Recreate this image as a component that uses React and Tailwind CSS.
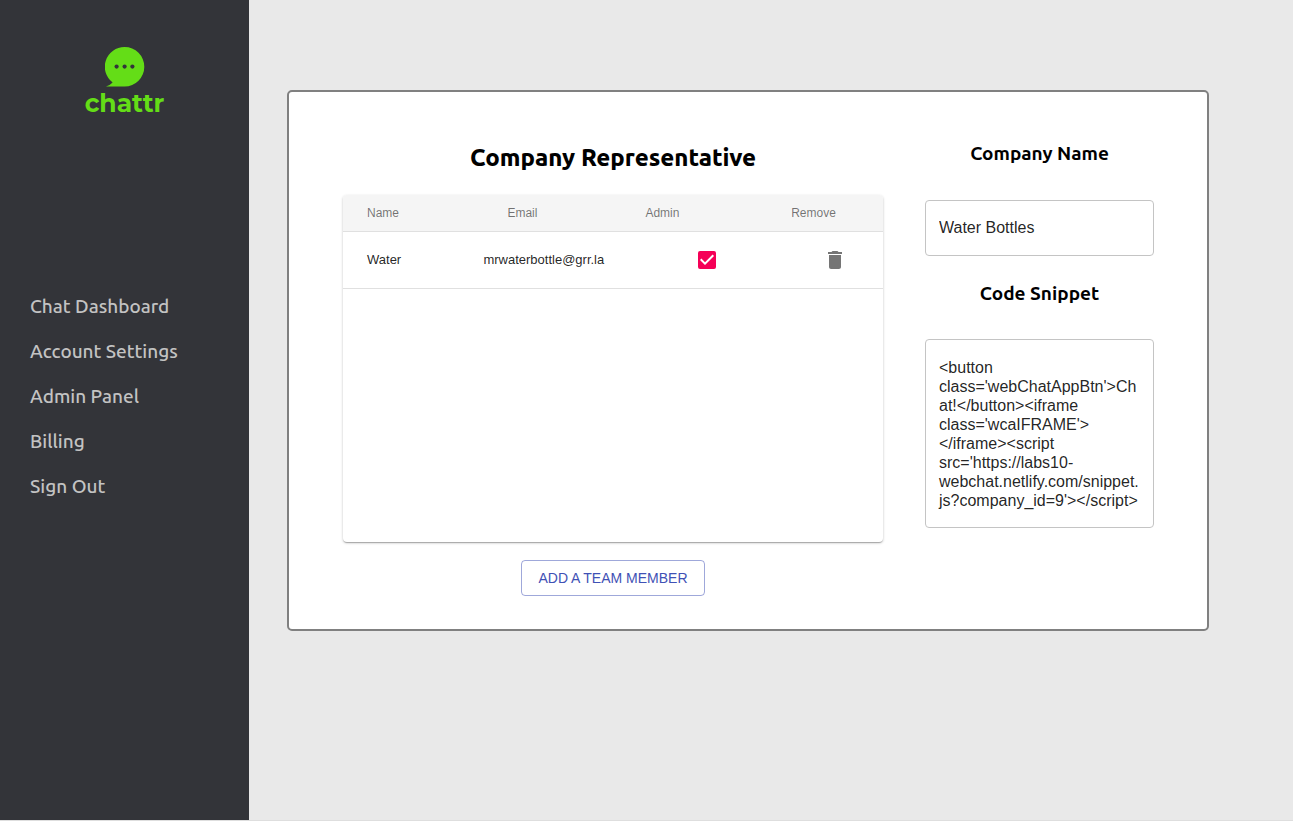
import { useState } from "react";
import { MdCheckBox, MdCheckBoxOutlineBlank, MdDelete } from "react-icons/md";

const LINKS = ["Chat Dashboard", "Account Settings", "Admin Panel", "Billing", "Sign Out"];

const SNIPPET =
  "<button class='webChatAppBtn'>Chat!</button><iframe class='wcaIFRAME'></iframe><script src='https://labs10-webchat.netlify.com/snippet.js?company_id=9'></script>";

function Logo() {
  return (
    <a href="#home" className="flex flex-col items-center text-[#64dd17]">
      <svg viewBox="0.4 0 40 40" className="h-10 w-10" aria-hidden="true">
        <path
          fill="currentColor"
          d="M20 0a19.7 19.7 0 0 1 0 39.4H1.4q4.6-1.6 6.6-4A19.7 19.7 0 0 1 20 0Z"
        />
        <g fill="#333439">
          <circle cx="12" cy="19.6" r="2.1" />
          <circle cx="20" cy="19.6" r="2.1" />
          <circle cx="27.8" cy="19.6" r="2.1" />
        </g>
      </svg>
      <span className="font-['Montserrat','Inter',sans-serif] text-[25px] leading-8 font-bold">chattr</span>
    </a>
  );
}

function Sidebar() {
  return (
    <aside className="flex w-[249px] shrink-0 flex-col bg-[#333439] pt-[47px]">
      <Logo />
      <nav className="mt-[165px] flex flex-col pl-[30px] font-['Ubuntu','Noto_Sans',sans-serif] text-[19px] font-medium text-[#c3c3c3]">
        {LINKS.map((label) => (
          <a key={label} href="#" className="flex h-[45px] items-center">
            {label}
          </a>
        ))}
      </nav>
    </aside>
  );
}

function TeamTable() {
  const [admin, setAdmin] = useState(true);
  const Box = admin ? MdCheckBox : MdCheckBoxOutlineBlank;
  return (
    <div className="min-h-[347px] w-full overflow-hidden rounded bg-white shadow-[0_1px_3px_rgba(0,0,0,0.2),0_1px_1px_rgba(0,0,0,0.14),0_2px_1px_-1px_rgba(0,0,0,0.12)]">
      <table className="w-full table-fixed border-separate border-spacing-0 text-left">
        <thead className="bg-[#f5f5f5] text-xs text-black/54 [&_th]:border-b [&_th]:border-[#e0e0e0]">
          <tr className="h-[37px]">
            <th scope="col" className="w-[26%] pl-6 font-normal">Name</th>
            <th scope="col" className="w-[30%] pl-6 font-normal">Email</th>
            <th scope="col" className="w-[27%] font-normal">Admin</th>
            <th scope="col" className="w-[17%] font-normal">Remove</th>
          </tr>
        </thead>
        <tbody className="text-[13px] text-black/87 [&_td]:border-b [&_td]:border-[#e0e0e0]">
          <tr className="h-[57px]">
            <td className="pl-6">Water</td>
            <td>mrwaterbottle@grr.la</td>
            <td className="pl-[50px]">
              <label className="grid h-6 w-6">
                <input
                  type="checkbox"
                  aria-label="Admin"
                  checked={admin}
                  onChange={(e) => setAdmin(e.target.checked)}
                  className="col-start-1 row-start-1 h-6 w-6 appearance-none"
                />
                <Box className="pointer-events-none col-start-1 row-start-1 h-6 w-6 text-[#f50057]" />
              </label>
            </td>
            <td className="pl-8">
              <button type="button" aria-label="Remove Water" className="block">
                <MdDelete className="h-6 w-6 text-black/54" />
              </button>
            </td>
          </tr>
        </tbody>
      </table>
    </div>
  );
}

export default function App() {
  return (
    <div className="flex min-h-screen border-b border-[#dedede] bg-[#e9e9e9] font-['Liberation_Sans',Arial,sans-serif]">
      <Sidebar />
      <main className="min-w-0 flex-1 pt-[90px] pr-[84px] pb-10 pl-[38px]">
        <div className="flex gap-[42px] rounded-[5px] border-2 border-[#808080] bg-white pt-[48px] pr-[53px] pb-[33px] pl-[54px]">
          <section className="flex min-w-0 flex-1 flex-col items-center">
            <h2 className="mb-[20px] font-['Ubuntu','Noto_Sans',sans-serif] text-2xl leading-[35px] font-extrabold text-black">
              Company Representative
            </h2>
            <TeamTable />
            <button
              type="button"
              className="mt-[18px] h-9 rounded border border-[#3f51b5]/50 px-4 text-sm text-[#3f51b5] uppercase"
            >
              Add a team member
            </button>
          </section>
          <section className="flex w-[229px] shrink-0 flex-col">
            <label
              htmlFor="company"
              className="text-center font-['Ubuntu','Noto_Sans',sans-serif] text-[19px] leading-[26px] font-bold text-black"
            >
              Company Name
            </label>
            <input
              id="company"
              defaultValue="Water Bottles"
              className="mt-[34px] h-14 w-full rounded border border-[#c4c4c4] px-[13px] text-base text-black/87"
            />
            <label
              htmlFor="snippet"
              className="mt-6 text-center font-['Ubuntu','Noto_Sans',sans-serif] text-[19px] leading-[26px] font-bold text-black"
            >
              Code Snippet
            </label>
            <textarea
              id="snippet"
              rows={8}
              readOnly
              defaultValue={SNIPPET}
              className="mt-[33px] w-full resize-none overflow-hidden rounded border border-[#c4c4c4] px-[13px] pt-[18px] pb-[17px] text-base leading-[19px] text-black/87"
            />
          </section>
        </div>
      </main>
    </div>
  );
}
